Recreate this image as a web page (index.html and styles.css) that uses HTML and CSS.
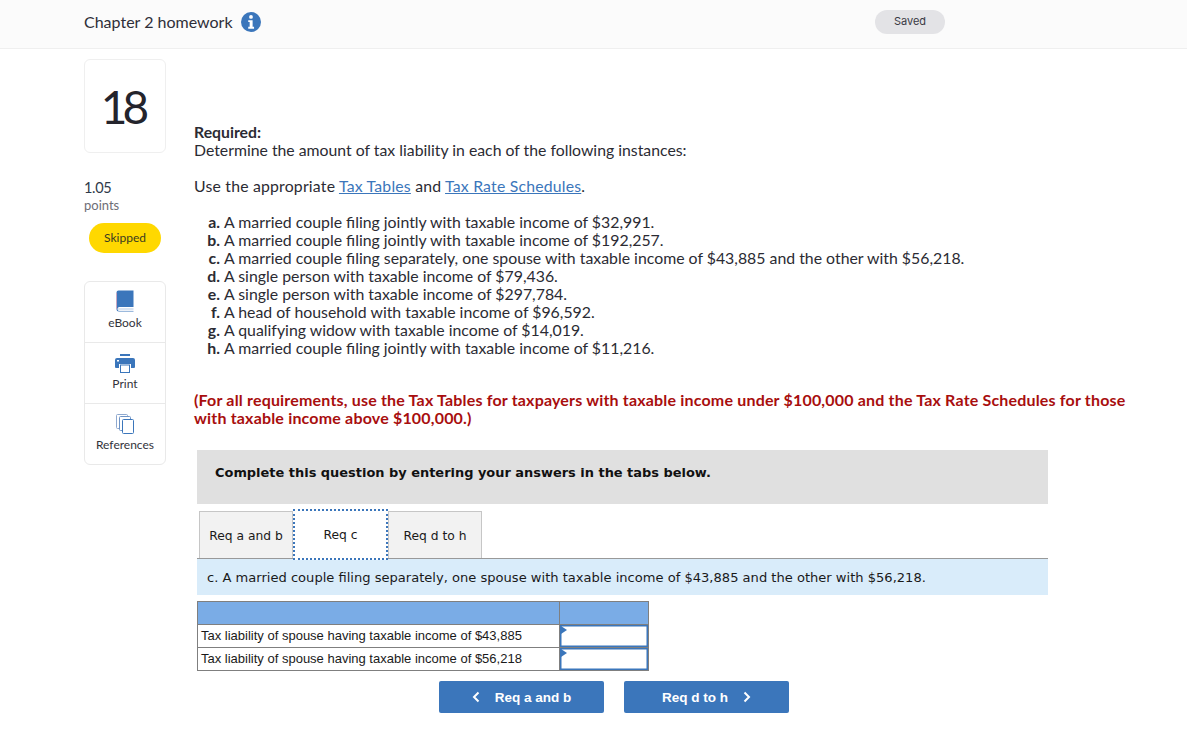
FILE: index.html
```html
<!DOCTYPE html>
<html lang="en">
<head>
<meta charset="utf-8">
<title>Chapter 2 homework</title>
<link rel="stylesheet" href="styles.css">
</head>
<body>
<header class="topbar">
  <div class="title-group">
    <span class="title">Chapter 2 homework</span>
    <svg class="info" width="20" height="20" viewBox="0 0 21 21"><circle cx="10.5" cy="10.5" r="10.5" fill="#3b76bb"/><circle cx="10.5" cy="5.2" r="2" fill="#fff"/><path d="M7.6 8.6h4.6v7h1.5v2H7.6v-2h1.5v-5H7.6z" fill="#fff"/></svg>
  </div>
  <span class="saved">Saved</span>
</header>
<main class="page">
  <aside class="side">
    <div class="qnum">18</div>
    <div class="points"><div class="pts-val">1.05</div><div class="pts-lbl">points</div></div>
    <div class="skipped">Skipped</div>
    <nav class="tools">
      <div class="tool">
        <svg width="18" height="22" viewBox="0 0 18 22"><path d="M2.5 0.5H17.5V17H3.5a2 2 0 0 0 0 4h14v.5H3A2.5 2.5 0 0 1 .5 19V2.5a2 2 0 0 1 2-2z" fill="#3b76bb"/><path d="M3 18h14.500v2.500H3a1.200 1.200 0 0 1 0-2.500z" fill="#d9e4f2"/><path d="M.5 3v16" stroke="#c9a7c0" stroke-width="1"/></svg>
        <span>eBook</span>
      </div>
      <div class="tool">
        <svg width="20" height="19" viewBox="0 0 20 19"><rect x="5" y="0" width="10" height="2" fill="#3b76bb"/><path d="M2 4h16a2 2 0 0 1 2 2v7a1 1 0 0 1-1 1h-3v-4H4v4H1a1 1 0 0 1-1-1V6a2 2 0 0 1 2-2z" fill="#3b76bb"/><rect x="5.500" y="11" width="9" height="7.500" fill="#fff" stroke="#3b76bb"/><rect x="2" y="6" width="2" height="1.500" fill="#fff"/></svg>
        <span>Print</span>
      </div>
      <div class="tool">
        <svg width="18" height="20" viewBox="0 0 18 20"><rect x=".5" y=".5" width="11" height="14" rx="1" fill="#fff" stroke="#8fa9cf"/><rect x="3.500" y="2.500" width="11" height="14" rx="1" fill="#fff" stroke="#6f94c6"/><rect x="6.500" y="5.500" width="11" height="14" rx="1" fill="#fff" stroke="#3b76bb"/></svg>
        <span>References</span>
      </div>
    </nav>
  </aside>
  <section class="content">
    <p class="para"><strong>Required:</strong><br>Determine the amount of tax liability in each of the following instances:</p>
    <p class="para para-links">Use the appropriate <a href="#">Tax Tables</a> and <a href="#">Tax Rate Schedules</a>.</p>
    <ol class="cases">
      <li><b>a.</b><span>A married couple filing jointly with taxable income of $32,991.</span></li>
      <li><b>b.</b><span>A married couple filing jointly with taxable income of $192,257.</span></li>
      <li><b>c.</b><span>A married couple filing separately, one spouse with taxable income of $43,885 and the other with $56,218.</span></li>
      <li><b>d.</b><span>A single person with taxable income of $79,436.</span></li>
      <li><b>e.</b><span>A single person with taxable income of $297,784.</span></li>
      <li><b>f.</b><span>A head of household with taxable income of $96,592.</span></li>
      <li><b>g.</b><span>A qualifying widow with taxable income of $14,019.</span></li>
      <li><b>h.</b><span>A married couple filing jointly with taxable income of $11,216.</span></li>
    </ol>
    <p class="warn">(For all requirements, use the Tax Tables for taxpayers with taxable income under $100,000 and the Tax Rate Schedules for those with taxable income above $100,000.)</p>
    <div class="exercise">
      <div class="banner">Complete this question by entering your answers in the tabs below.</div>
      <div class="tabs">
        <div class="tab">Req a and b</div>
        <div class="tab active">Req c</div>
        <div class="tab">Req d to h</div>
      </div>
      <div class="prompt">c. A married couple filing separately, one spouse with taxable income of $43,885 and the other with $56,218.</div>
      <table class="grid">
        <tr class="head"><th></th><th></th></tr>
        <tr><td>Tax liability of spouse having taxable income of $43,885</td><td class="cell"><i class="mark"></i></td></tr>
        <tr><td>Tax liability of spouse having taxable income of $56,218</td><td class="cell"><i class="mark"></i></td></tr>
      </table>
      <div class="pager">
        <button class="btn" type="button"><svg width="8" height="12" viewBox="0 0 8 12"><path d="M6.500 1.500 2 6l4.500 4.500" fill="none" stroke="#fff" stroke-width="2"/></svg><span>Req a and b</span></button>
        <button class="btn" type="button"><span>Req d to h</span><svg width="8" height="12" viewBox="0 0 8 12"><path d="M1.500 1.500 6 6l-4.500 4.500" fill="none" stroke="#fff" stroke-width="2"/></svg></button>
      </div>
    </div>
  </section>
</main>
</body>
</html>
```

FILE: styles.css
```css
* { box-sizing: border-box; }
html, body { margin: 0; padding: 0; }
body { background: #fff; color: #2b2b33; font-family: "Lato", "Open Sans", sans-serif; font-size: 16px; overflow: hidden; }

.topbar { height: 49px; background: #fbfbfb; border-bottom: 1px solid #efefef; padding: 0 242px 6px 84px; display: flex; align-items: center; justify-content: space-between; }
.title-group { display: flex; align-items: center; gap: 8px; }
.title { font-size: 16px; color: #2e2e38; }
.info { display: block; margin-top: 2px; }
.saved { width: 70px; height: 24px; margin-top: 2px; border-radius: 12px; background: #e3e3e6; font-size: 11px; line-height: 23px; text-align: center; color: #3a3a44; font-family: "Inter", sans-serif; }

.page { display: flex; gap: 28px; padding: 10px 0 0 84px; }
.side { width: 82px; flex: none; display: flex; flex-direction: column; }
.qnum { height: 94px; border: 1px solid #efefef; border-radius: 6px; display: flex; align-items: center; justify-content: center; font-size: 46px; letter-spacing: -5px; padding-right: 5px; color: #24242c; }
.points { margin-top: 26px; }
.pts-val { font-size: 14.500px; letter-spacing: -.3px; line-height: 18px; color: #2f3a4a; }
.pts-lbl { font-size: 13px; line-height: 16px; color: #6e6e76; }
.skipped { margin: 10px 5px 0 5px; width: 72px; height: 30px; border-radius: 15px; background: #ffd800; font-size: 12px; line-height: 30px; text-align: center; color: #3a3a20; }
.tools { margin-top: 28px; border: 1px solid #e9e9e9; border-radius: 6px; }
.tool { height: 61px; display: flex; flex-direction: column; align-items: center; justify-content: flex-end; padding-bottom: 12px; gap: 4px; font-size: 12px; color: #33333b; border-bottom: 1px solid #e9e9e9; }
.tool:last-child { border-bottom: 0; height: 60px; }
.tool span { line-height: 14px; }

.content { width: 940px; padding-top: 64px; }
.para { margin: 0 0 18px; line-height: 18px; font-size: 15.800px; }
.para-links { letter-spacing: .2px; }
.para a { color: #3b76bb; text-decoration: underline; }
.cases { list-style: none; margin: 0; padding: 0 0 0 9px; font-size: 15.850px; line-height: 18px; }
.cases li { display: flex; gap: 4px; }
.cases b { width: 17px; text-align: right; }
.warn { margin: 34px 0 0; font-weight: 700; color: #a80e0e; font-size: 16px; line-height: 18px; letter-spacing: .18px; }

.exercise { margin: 23px 0 0 3px; width: 851px; }
.banner { height: 54px; background: #e0e0e0; padding: 0 0 10px 18px; font-family: "DejaVu Sans", sans-serif; font-weight: 700; font-size: 12.950px; display: flex; align-items: center; color: #111; }
.tabs { display: flex; margin-top: 7px; height: 48px; padding-left: 2px; border-bottom: 1px solid #999; align-items: flex-end; }
.tab { width: 94px; height: 47px; background: #f2f2f2; border: 1px solid #c6c6c6; border-bottom: 0; font-family: "DejaVu Sans", sans-serif; font-size: 12.300px; line-height: 48px; text-align: center; color: #1a1a1a; }
.tab.active { width: 95px; height: 51px; background: #fff; border: 2px dotted #3b76bb; line-height: 49px; margin: 0 0 -2px; position: relative; z-index: 1; }
.prompt { height: 36px; background: #d9ecfa; padding-left: 10px; font-family: "DejaVu Sans", sans-serif; font-size: 13.070px; line-height: 38px; color: #1a1a1a; }

.grid { margin-top: 6px; width: 452px; border-collapse: collapse; table-layout: fixed; font-family: "Liberation Sans", sans-serif; font-size: 13px; color: #1a1a1a; }
.grid th, .grid td { border: 1px solid #7f7f7f; padding: 0 3px 2px; height: 23px; }
.grid .head th { background: #7aace6; }
.grid th:first-child, .grid td:first-child { width: 362px; }
.grid .cell { position: relative; padding: 0; box-shadow: inset 0 0 0 1.500px #3b76bb; }
.mark { position: absolute; left: 1px; top: 1px; width: 0; height: 0; border-left: 6px solid #3b76bb; border-top: 4px solid transparent; border-bottom: 4px solid transparent; }

.pager { display: flex; gap: 20px; margin: 10px 0 0 242px; }
.btn { width: 165px; height: 32px; display: flex; align-items: center; justify-content: center; gap: 15px; border: 0; border-radius: 2px; background: #3b76bb; color: #fff; font-family: "Liberation Sans", sans-serif; font-weight: 700; font-size: 13.500px; padding: 0; }
```
